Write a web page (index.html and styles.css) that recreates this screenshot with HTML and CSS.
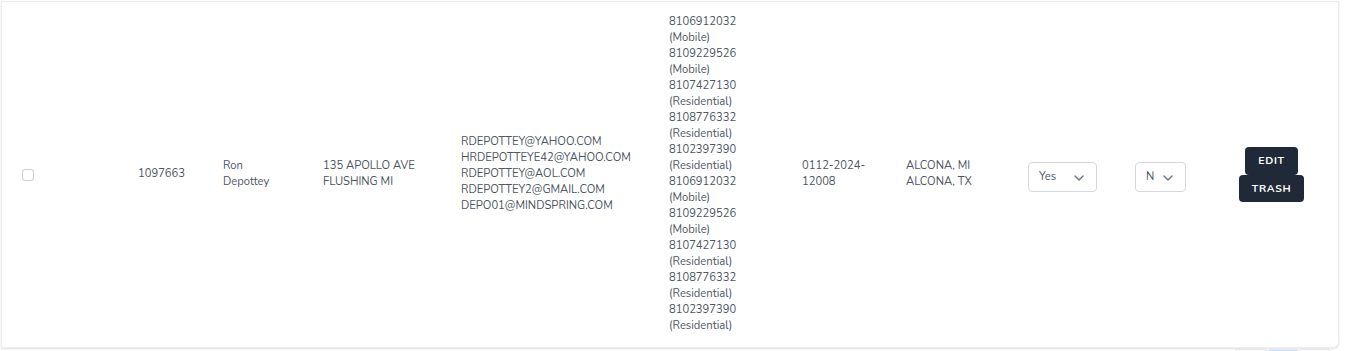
FILE: index.html
```html
<!DOCTYPE html>
<html>
<head>
  <meta charset="utf-8">
  <link rel="stylesheet" href="styles.css">
</head>
<body>
  <div class="page">
    <div class="card">
      <div class="row">
        <div class="cell cell-check">
          <input type="checkbox" class="row-check">
        </div>
        <div class="cell">1097663</div>
        <div class="cell cell-name">Ron Depottey</div>
        <div class="cell cell-address">135 APOLLO AVE FLUSHING MI</div>
        <div class="cell cell-emails">
          <div>RDEPOTTEY@YAHOO.COM</div>
          <div>HRDEPOTTEYE42@YAHOO.COM</div>
          <div>RDEPOTTEY@AOL.COM</div>
          <div>RDEPOTTEY2@GMAIL.COM</div>
          <div>DEPO01@MINDSPRING.COM</div>
        </div>
        <div class="cell cell-phones">
          <div>8106912032 (Mobile)</div>
          <div>8109229526 (Mobile)</div>
          <div>8107427130 (Residential)</div>
          <div>8108776332 (Residential)</div>
          <div>8102397390 (Residential)</div>
          <div>8106912032 (Mobile)</div>
          <div>8109229526 (Mobile)</div>
          <div>8107427130 (Residential)</div>
          <div>8108776332 (Residential)</div>
          <div>8102397390 (Residential)</div>
        </div>
        <div class="cell cell-date">0112-2024-12008</div>
        <div class="cell">
          <div>ALCONA, MI</div>
          <div>ALCONA, TX</div>
        </div>
        <div class="cell">
          <div class="select select-wide">
            <span>Yes</span>
            <svg class="chevron" viewBox="0 0 10 6" width="10" height="6"><path d="M1 1l4 4 4-4" fill="none" stroke="#6b7280" stroke-width="1.4" stroke-linecap="round" stroke-linejoin="round"/></svg>
          </div>
        </div>
        <div class="cell">
          <div class="select select-narrow">
            <span>N</span>
            <svg class="chevron" viewBox="0 0 10 6" width="10" height="6"><path d="M1 1l4 4 4-4" fill="none" stroke="#6b7280" stroke-width="1.4" stroke-linecap="round" stroke-linejoin="round"/></svg>
          </div>
        </div>
        <div class="cell cell-actions">
          <button class="btn btn-edit">Edit</button>
          <button class="btn btn-trash">Trash</button>
        </div>
      </div>
    </div>
    <div class="pager">
      <span class="pager-item"></span>
      <span class="pager-item active"></span>
      <span class="pager-item"></span>
    </div>
  </div>
</body>
</html>
```

FILE: styles.css
```css
body {
  margin: 0;
  background-color: #ffffff;
  font-family: "Nunito", "Lato", "Noto Sans", sans-serif;
  font-size: 11.2px;
  color: #4b5563;
}

.page {
  padding: 1px 0 0 1px;
  width: 1338px;
}

.card {
  background-color: #ffffff;
  border: 1px solid #ebedf0;
  border-radius: 0 0 6px 0;
  box-shadow: 0 1px 2px rgba(0, 0, 0, 0.12);
}

.row {
  display: grid;
  grid-template-columns: 136px 85px 100px 138px 208px 133px 104px 122px 107px 85px 103px;
  align-items: center;
  padding: 12px 0 13px 0;
  line-height: 16px;
}

.cell {
  padding-right: 22px;
}

.cell-check {
  padding-left: 20px;
  display: flex;
  align-items: center;
}

.row-check {
  width: 12px;
  height: 12px;
  margin: 1px 0 0 0;
  appearance: none;
  border: 1px solid #c9ccd2;
  border-radius: 3px;
  background-color: #ffffff;
}

.cell-name {
  padding-right: 42px;
}

.cell-emails {
  padding-right: 0;
  white-space: nowrap;
}

.cell-phones {
  padding-right: 24px;
}

.cell-date {
  padding-right: 26px;
}

.select {
  display: flex;
  align-items: center;
  justify-content: space-between;
  box-sizing: border-box;
  height: 30px;
  margin-top: 6px;
  padding: 0 12px 0 10px;
  border: 1px solid #d4d7dd;
  border-radius: 4px;
  background-color: #ffffff;
  color: #4b5563;
}

.select-wide {
  width: 69px;
}

.select-narrow {
  width: 51px;
}

.chevron {
  margin-top: 2px;
}

.cell-actions {
  padding-right: 0;
  display: flex;
  flex-direction: column;
  align-items: center;
}

.btn {
  border: none;
  border-radius: 4px;
  background-color: #1f2937;
  color: #ffffff;
  font-family: inherit;
  font-size: 10.5px;
  font-weight: bold;
  letter-spacing: 0.7px;
  text-transform: uppercase;
  padding: 0 13px;
  cursor: pointer;
}

.btn-edit {
  height: 28px;
}

.btn-trash {
  height: 27px;
}

.pager {
  display: flex;
  justify-content: flex-end;
  margin-top: 1px;
  padding-right: 8px;
}

.pager-item {
  width: 30px;
  height: 2px;
  border: 1px solid #e5e7eb;
  border-bottom: none;
  border-radius: 3px 3px 0 0;
}

.pager-item.active {
  background-color: #cfe2fb;
}
```
